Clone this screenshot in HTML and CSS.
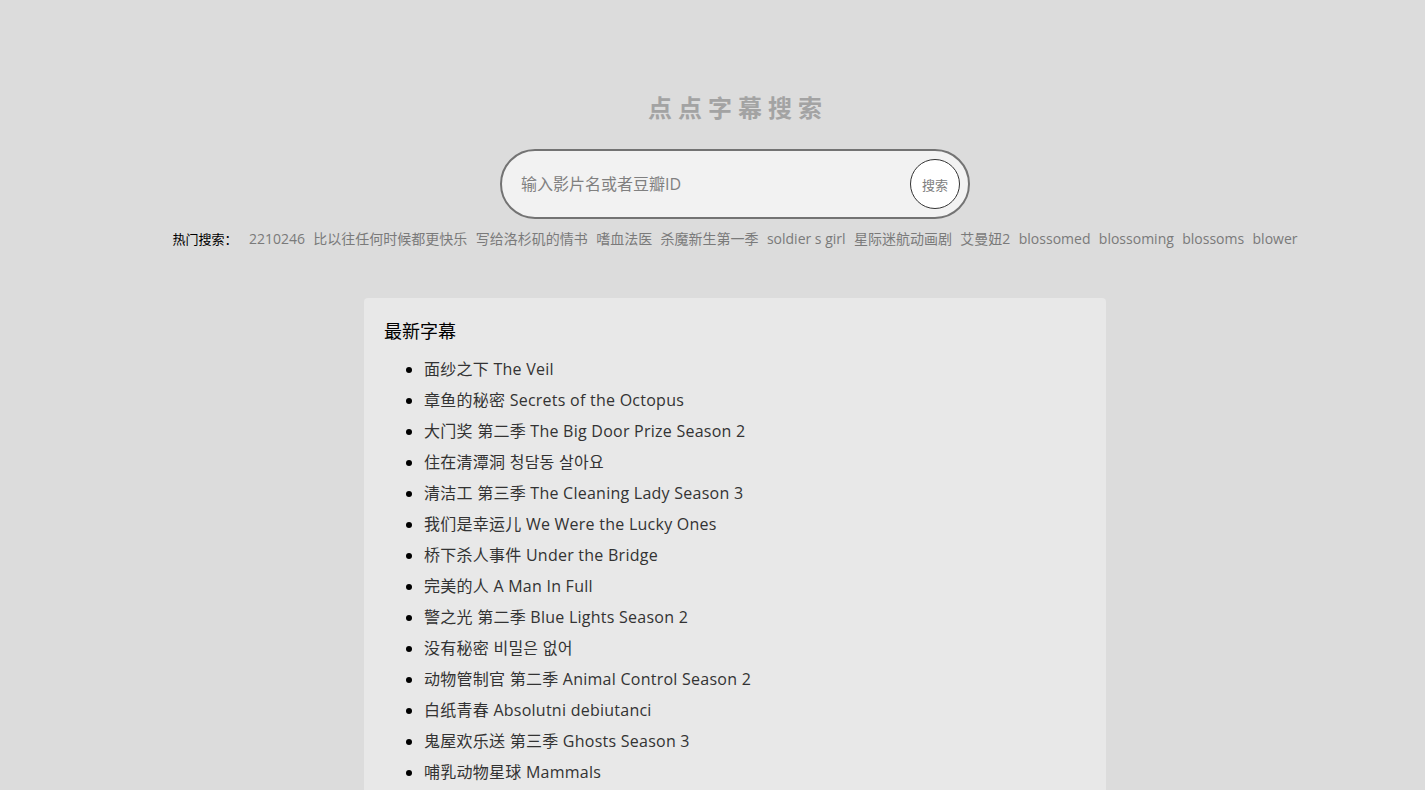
FILE: index.html
```html
<!DOCTYPE html>
<html>
	<head>
		<meta charset="UTF-8">
		<meta name="viewport" content="width=device-width, initial-scale=1.0">
		<title>点点字幕搜索</title>
		<link rel="stylesheet" href="styles.css">
	</head>
	<body>
		<div class="page">
			<h1 class="logo">点点字幕搜索</h1>

			<form class="search" onsubmit="return false;">
				<input type="text" class="searchInput" placeholder="输入影片名或者豆瓣ID">
				<button class="searchBtn">搜索</button>
			</form>

			<div class="hot">
				<span class="hotLabel">热门搜索：</span>
				<a href="#">2210246</a>
				<a href="#">比以往任何时候都更快乐</a>
				<a href="#">写给洛杉矶的情书</a>
				<a href="#">嗜血法医</a>
				<a href="#">杀魔新生第一季</a>
				<a href="#">soldier s girl</a>
				<a href="#">星际迷航动画剧</a>
				<a href="#">艾曼妞2</a>
				<a href="#">blossomed</a>
				<a href="#">blossoming</a>
				<a href="#">blossoms</a>
				<a href="#">blower</a>
			</div>

			<div class="latest">
				<h3>最新字幕</h3>
				<ul>
					<li><a href="#">面纱之下 The Veil</a></li>
					<li><a href="#">章鱼的秘密 Secrets of the Octopus</a></li>
					<li><a href="#">大门奖 第二季 The Big Door Prize Season 2</a></li>
					<li><a href="#">住在清潭洞 청담동 살아요</a></li>
					<li><a href="#">清洁工 第三季 The Cleaning Lady Season 3</a></li>
					<li><a href="#">我们是幸运儿 We Were the Lucky Ones</a></li>
					<li><a href="#">桥下杀人事件 Under the Bridge</a></li>
					<li><a href="#">完美的人 A Man In Full</a></li>
					<li><a href="#">警之光 第二季 Blue Lights Season 2</a></li>
					<li><a href="#">没有秘密 비밀은 없어</a></li>
					<li><a href="#">动物管制官 第二季 Animal Control Season 2</a></li>
					<li><a href="#">白纸青春 Absolutni debiutanci</a></li>
					<li><a href="#">鬼屋欢乐送 第三季 Ghosts Season 3</a></li>
					<li><a href="#">哺乳动物星球 Mammals</a></li>
				</ul>
			</div>
		</div>
	</body>
</html>
```

FILE: styles.css
```css
* {
	box-sizing: border-box;
}

body {
	margin: 0;
	padding: 0;
	background-color: #dcdcdc;
	color: #111;
	font-family: "Open Sans", "Noto Sans CJK SC", sans-serif;
}

a {
	text-decoration: none;
	color: inherit;
}

.page {
	padding: 91px 0 0 45px;
	display: flex;
	flex-direction: column;
	align-items: center;
}

.logo {
	margin: 0;
	font-size: 24px;
	line-height: 32px;
	font-weight: bold;
	letter-spacing: 6px;
	padding-left: 6px;
	color: #a3a3a3;
	font-family: "Noto Sans CJK SC", sans-serif;
}

.search {
	margin-top: 26px;
	width: 470px;
	height: 70px;
	border: 2px solid #737373;
	border-radius: 35px;
	background-color: #f2f2f2;
	display: flex;
	align-items: center;
	padding: 0 8px 0 17px;
}

.searchInput {
	flex: 1 1 auto;
	border: none;
	outline: none;
	background: transparent;
	font-size: 16px;
	font-family: "Open Sans", "Noto Sans CJK SC", sans-serif;
	color: #333;
}

.searchInput::placeholder {
	color: #808080;
}

.searchBtn {
	flex: 0 0 50px;
	height: 50px;
	border-radius: 50%;
	border: 1px solid #333;
	background-color: #fff;
	color: #808080;
	font-size: 13px;
	padding: 0;
	font-family: "Noto Sans CJK SC", sans-serif;
	cursor: pointer;
}

.hot {
	margin-top: 10px;
	display: flex;
	align-items: center;
	gap: 8.4px;
	font-size: 14px;
	line-height: 20px;
	color: #7a7a7a;
	white-space: nowrap;
}

.hotLabel {
	color: #000;
	font-size: 13px;
	margin-right: 3px;
	font-family: "Noto Sans CJK SC", sans-serif;
}

.latest {
	margin-top: 49px;
	width: 742px;
	background-color: #e8e8e8;
	border-radius: 4px;
	padding: 20px 20px 40px;
}

.latest h3 {
	margin: 0;
	font-size: 18px;
	line-height: 24px;
	font-weight: normal;
	color: #000;
	font-family: "Noto Sans CJK SC", sans-serif;
}

.latest ul {
	margin: 12px 0 0;
	padding-left: 40px;
}

.latest li {
	font-size: 16px;
	line-height: 31px;
	color: #000;
	letter-spacing: 0.25px;
}

.latest li a {
	color: #333;
}
```
